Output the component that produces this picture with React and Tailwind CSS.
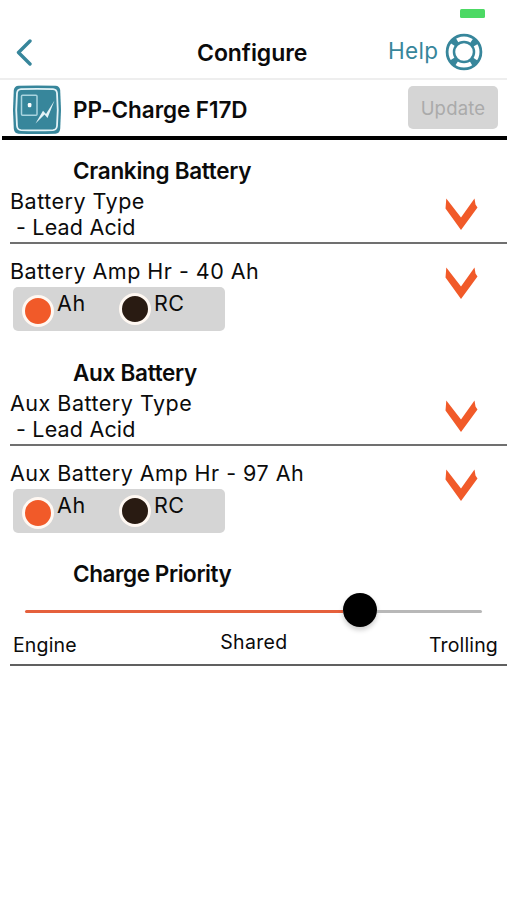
function Chevron() {
  return (
    <svg className="block h-[34px] w-[34px]" viewBox="0 0 34 34" fill="#f15a29">
      <path d="M2.300 .5 L17 19.500 L30.500 .5 L31.500 6.500 L33.500 9.500 L17 32 L1.500 10.500 Z" />
    </svg>
  );
}

function DeviceIcon() {
  return (
    <svg className="block h-[50px] w-[50px]" viewBox="0 0 50 50" fill="none">
      <path d="M6.500 .8 Q25 .3 43.500 .8 Q47.500 1 48.200 5 Q49.800 25 48.200 44 Q47.500 48.500 43.500 48.700 Q25 49.300 6.500 48.700 Q2.500 48.500 1.800 44 Q.2 25 1.800 5 Q2.500 1 6.500 .8 Z" fill="#37869b" />
      <path d="M9 4.200 Q25 3.700 41 4.200 Q44.500 4.400 45 8 Q46.500 25 45 41 Q44.500 44.900 41 45.100 Q25 45.600 9 45.100 Q5.500 44.900 5 41 Q3.500 25 5 8 Q5.500 4.400 9 4.200 Z" stroke="#e4f3f7" strokeWidth="1.800" />
      <rect x="9.500" y="10.200" width="15.500" height="20" rx="1" stroke="#a9d4df" strokeWidth="1.500" />
      <rect x="15.800" y="18" width="3.600" height="4.200" rx="1.200" fill="#fff" />
      <path d="M42.500 15.500 L35.500 33 L32.500 29.500 L23.500 38.500 L31 25.800 L34 29 Z" fill="#e4f3f7" />
    </svg>
  );
}

function LifeRing() {
  return (
    <svg className="block h-[38px] w-[38px]" viewBox="0 0 38 38" fill="none" stroke="#37869b">
      <circle cx="19" cy="19" r="16.900" strokeWidth="2.800" />
      <circle cx="19" cy="19" r="10" strokeWidth="2.500" />
      <circle cx="19" cy="19" r="13.400" strokeWidth="6" strokeDasharray="6 15.050" strokeDashoffset="-7.520" />
    </svg>
  );
}

function UnitToggle() {
  return (
    <div className="ml-[13px] flex h-[44px] w-[212px] rounded-[5px] bg-[#d5d5d5] text-[21.500px] leading-[26px]">
      <span className="mt-[8px] ml-[9px] h-[32px] w-[32px] rounded-full border-[3px] border-[#fff8f2] bg-[#f15a29]" />
      <span className="mt-[3px] ml-[3px] w-[62px] tracking-[0.700px]">Ah</span>
      <span className="mt-[6px] h-[32px] w-[32px] rounded-full border-[3px] border-[#fff8f2] bg-[#291b12]" />
      <span className="mt-[3px] ml-[3px] tracking-[0.400px]">RC</span>
    </div>
  );
}

function BatterySection({ title, typeLabel, type, capacity }) {
  return (
    <section className="h-[201.500px]">
      <h2 className="ml-[73px] text-[22.500px] leading-[26px] font-semibold tracking-[-0.280px]">{title}</h2>
      <div className="mt-[4px] ml-[10px] flex h-[56px] justify-between border-b-2 border-[#707070] pr-[29px] text-[21.500px] leading-[26px] tracking-[0.500px]">
        <div>
          <p>{typeLabel}</p>
          <p className="ml-[6px] tracking-[0.180px]">- {type}</p>
        </div>
        <div className="mt-[10px]"><Chevron /></div>
      </div>
      <div className="mt-[14px] ml-[10px] flex h-[29px] justify-between pr-[29px] text-[21.500px] leading-[26px] tracking-[0.490px]">
        <p>{capacity}</p>
        <div className="mt-[9px]"><Chevron /></div>
      </div>
      <UnitToggle />
    </section>
  );
}

export default function App() {
  return (
    <main className="h-[900px] w-[507px] overflow-hidden bg-white font-['Inter',sans-serif] text-[#0b0b0b]">
      <div className="flex h-[18px] justify-end pt-[9px] pr-[22px]">
        <span className="h-[9px] w-[25px] rounded-[1.500px] bg-[#4cd964]" />
      </div>
      <header className="grid h-[62px] grid-cols-[197px_1fr_119px] border-b-2 border-[#eeeeee]">
        <svg className="mt-[20px] ml-[16px] h-[28px] w-[18px]" viewBox="0 0 18 28" fill="none" stroke="#37869b" strokeWidth="3.400" strokeLinecap="round" strokeLinejoin="round">
          <path d="M14 3 L2.500 14.500 L14 26" />
        </svg>
        <h1 className="mt-[22px] text-[23px] leading-[26px] font-semibold tracking-[-0.050px]">Configure</h1>
        <div className="flex text-[#37869b]">
          <span className="mt-[20px] w-[57px] text-[22.500px] leading-[26px] tracking-[0.300px]">Help</span>
          <div className="mt-[15px]"><LifeRing /></div>
        </div>
      </header>
      <div className="ml-[2px] flex h-[60px] border-b-[4px] border-black pr-[9px]">
        <div className="mt-[5px] ml-[10px]"><DeviceIcon /></div>
        <h2 className="mt-[16px] ml-[11px] text-[22.500px] leading-[28px] font-semibold tracking-[-0.080px]">PP-Charge F17D</h2>
        <button className="mt-[6px] ml-auto h-[43px] w-[90px] rounded-[5px] bg-[#d5d5d5] pt-[3px] text-[18.500px] tracking-[0.200px] text-[#aaaaaa]">Update</button>
      </div>
      <div className="pt-[18px]">
        <BatterySection title="Cranking Battery" typeLabel="Battery Type" type="Lead Acid" capacity="Battery Amp Hr - 40 Ah" />
        <BatterySection title="Aux Battery" typeLabel="Aux Battery Type" type="Lead Acid" capacity="Aux Battery Amp Hr - 97 Ah" />
      </div>
      <section>
        <h2 className="ml-[73px] text-[22.500px] leading-[26px] font-semibold tracking-[-0.420px]">Charge Priority</h2>
        <div className="mr-[25px] ml-[25px] flex h-[47px] items-center">
          <span className="mt-[1px] h-[3px] w-[318px] rounded-l-full bg-[#e5603c]" />
          <span className="mt-[-1px] h-[34px] w-[34px] rounded-full bg-black shadow-[0_3px_5px_rgba(0,0,0,0.200)]" />
          <span className="mt-[1px] h-[3px] flex-1 rounded-r-full bg-[#b8b8b8]" />
        </div>
        <div className="ml-[10px] flex h-[31.500px] justify-between border-b-2 border-[#606060] pr-[9px] pl-[3px] text-[19.500px] leading-[24px] tracking-[0.150px]">
          <span className="mt-[-1px]">Engine</span>
          <span className="mt-[-4px] ml-[2px] tracking-[0.300px]">Shared</span>
          <span className="mt-[-1px]">Trolling</span>
        </div>
      </section>
    </main>
  );
}
